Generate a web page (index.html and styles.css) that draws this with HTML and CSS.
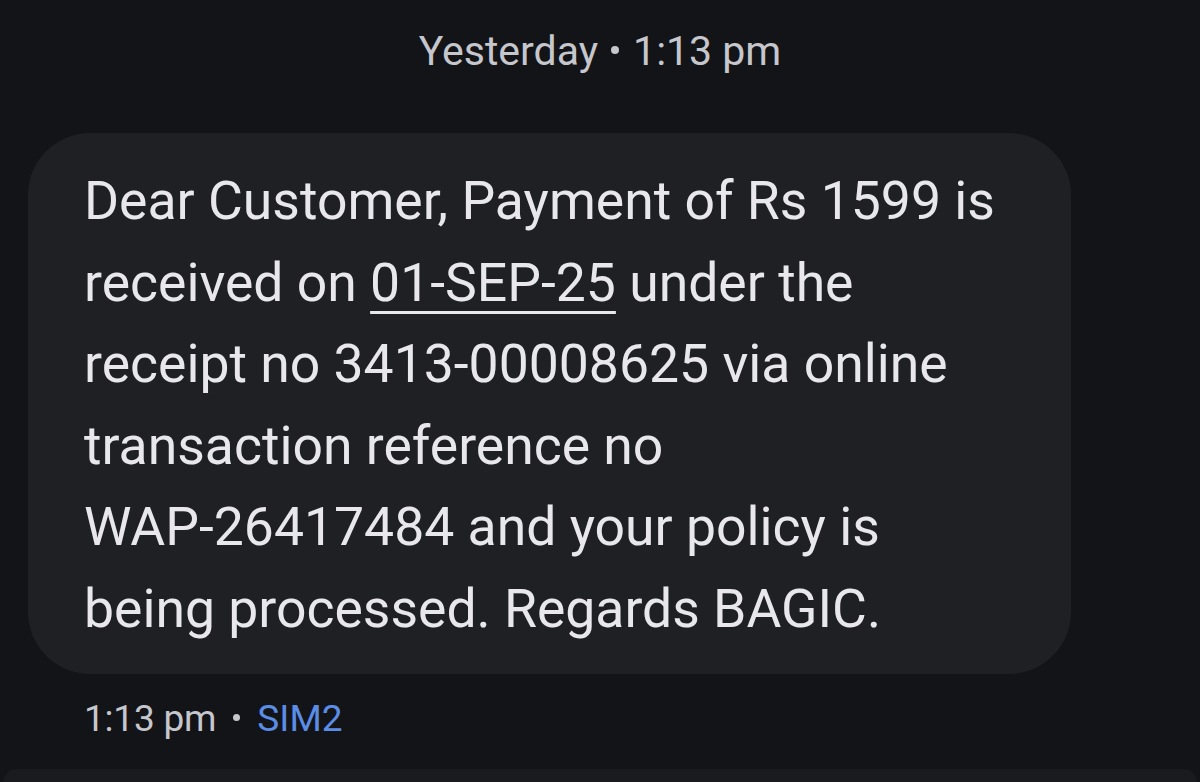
FILE: index.html
```html
<!DOCTYPE html>
<html>
<head>
<meta charset="utf-8">
<link rel="stylesheet" href="styles.css">
</head>
<body>
<div class="thread">
  <div class="day">Yesterday<span class="dot" aria-label="•"></span>1:13 pm</div>
  <div class="bubble">
    <p class="msg">Dear Customer, Payment of Rs 1599 is received on <span class="link">01-SEP-25</span> under the receipt no <span class="nw">3413-00008625</span> via online transaction reference no <span class="nw">WAP-26417484</span> and your policy is being processed. Regards BAGIC.</p>
  </div>
  <div class="meta">1:13 pm<span class="dot dot-meta" aria-label="•"></span><span class="sim">SIM2</span></div>
  <div class="next"></div>
</div>
</body>
</html>
```

FILE: styles.css
```css
html, body {
  margin: 0;
  padding: 0;
  background: #131418;
  height: 100%;
  overflow: hidden;
}
.thread {
  font-family: Roboto, "Noto Sans", sans-serif;
  display: flex;
  flex-direction: column;
}
.day {
  text-align: center;
  color: #c6c7cc;
  font-size: 41px;
  line-height: 48px;
  padding-top: 27px;
  height: 133px;
  box-sizing: border-box;
}
.dot {
  display: inline-block;
  width: 8px;
  height: 8px;
  border-radius: 50%;
  background: #c6c7cc;
  margin: 0 14px 0 13px;
  vertical-align: 0.28em;
}
.dot-meta {
  width: 7px;
  height: 7px;
  margin: 0 17px 0 17px;
}
.bubble {
  margin-left: 28px;
  width: 1043px;
  height: 541px;
  box-sizing: border-box;
  background: #1f2024;
  border-radius: 62px;
  padding: 27px 50px 0 56px;
}
.msg {
  margin: 0;
  color: #e8e8ec;
  font-size: 53.5px;
  line-height: 81.6px;
}
.nw {
  white-space: nowrap;
}
.link {
  text-decoration: underline;
  text-decoration-thickness: 3px;
  text-underline-offset: 10px;
}
.meta {
  padding-left: 84px;
  color: #c6c7cc;
  font-size: 37px;
  letter-spacing: -0.2px;
  line-height: 48px;
  padding-top: 21px;
  height: 95px;
  box-sizing: border-box;
}
.sim {
  color: #5b8de6;
  letter-spacing: 0;
}
.next {
  margin-left: 3px;
  width: 1194px;
  height: 40px;
  background: #1a1b1f;
  border-radius: 14px;
}
```
